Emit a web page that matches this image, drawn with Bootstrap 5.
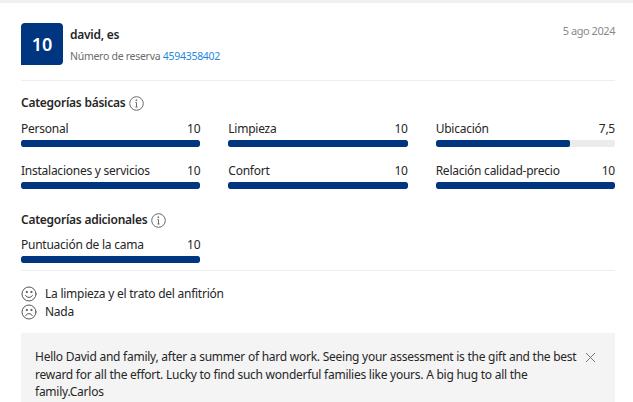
<!DOCTYPE html>
<html lang="es"><head><meta charset="utf-8">
<title>Reseña</title>
<link href="https://cdn.jsdelivr.net/npm/bootstrap@5.3.0/dist/css/bootstrap.min.css" rel="stylesheet">
<style>
html,body{height:402px;overflow:hidden;background:#fff}
body{font-family:"Noto Sans","Open Sans",sans-serif;font-size:12px;line-height:18px;color:#262626;letter-spacing:-.25px}
.rv-page{border-top:3px solid #f0f0f0;padding:20px 18px 0 21px}
.rv-top{gap:7px}
.rv-score{width:42px;height:42px;background:#003580;color:#fff;font-size:18px;font-weight:600;border-radius:4px 4px 4px 0;letter-spacing:0}
.rv-name{font-weight:600;line-height:18px;margin-top:3px}
.rv-sub{font-size:10.5px;color:#6b6b6b;margin-top:3px;line-height:18px;letter-spacing:-.28px}
.rv-sub a{color:#1b87e0;text-decoration:none}
.rv-date{font-size:11px;color:#8a8a8a;line-height:18px;margin-top:-1px;letter-spacing:-.45px}
.rv-rule{height:1px;background:#eee}
.rv-rule-a{margin-top:15px}
.rv-rule-b{margin-top:7px}
.rv-head{font-weight:600;line-height:18px}
.rv-head-a{margin-top:13px}
.rv-head-b{margin-top:22px}
.rv-grid{display:grid;grid-template-columns:repeat(3,1fr);column-gap:28px;row-gap:15px}
.rv-grid-a{margin-top:8px}
.rv-grid-b{margin-top:7px}
.rv-bar{height:7px;background:#ebebeb;border-radius:2px;margin-top:2px}
.rv-bar .progress-bar{background:#003580;border-radius:2px}
.rv-msg{background:#f4f4f4;padding:15px 19px 0 14px;height:69px;line-height:17.5px;margin-top:12px}
.rv-feel{line-height:18px}
.rv-feel-a{margin-top:14px}
</style></head>
<body>
<div class="rv-page">
  <div class="d-flex justify-content-between">
    <div class="d-flex rv-top">
      <div class="rv-score d-flex align-items-center justify-content-center">10</div>
      <div>
        <div class="rv-name">david, es</div>
        <div class="rv-sub">Número de reserva <a href="#">4594358402</a></div>
      </div>
    </div>
    <div class="rv-date">5 ago 2024</div>
  </div>
  <div class="rv-rule rv-rule-a"></div>

  <div class="rv-head rv-head-a d-flex align-items-center gap-1">Categorías básicas
    <svg width="15" height="15" viewBox="0 0 15 15" fill="none" stroke="#6b6b6b"><circle cx="7.5" cy="7.5" r="6.8"/><path d="M7.500 6.500v4.500M6.400 6.500h1.100M6.400 11h2.200"/><circle cx="7.300" cy="4.200" r=".5" fill="#6b6b6b"/></svg>
  </div>
  <div class="rv-grid rv-grid-a">
    <div><div class="d-flex justify-content-between"><span>Personal</span><span>10</span></div><div class="progress rv-bar"><div class="progress-bar" style="width:100%"></div></div></div>
    <div><div class="d-flex justify-content-between"><span>Limpieza</span><span>10</span></div><div class="progress rv-bar"><div class="progress-bar" style="width:100%"></div></div></div>
    <div><div class="d-flex justify-content-between"><span>Ubicación</span><span>7,5</span></div><div class="progress rv-bar"><div class="progress-bar" style="width:75%"></div></div></div>
    <div><div class="d-flex justify-content-between"><span>Instalaciones y servicios</span><span>10</span></div><div class="progress rv-bar"><div class="progress-bar" style="width:100%"></div></div></div>
    <div><div class="d-flex justify-content-between"><span>Confort</span><span>10</span></div><div class="progress rv-bar"><div class="progress-bar" style="width:100%"></div></div></div>
    <div><div class="d-flex justify-content-between"><span>Relación calidad-precio</span><span>10</span></div><div class="progress rv-bar"><div class="progress-bar" style="width:100%"></div></div></div>
  </div>

  <div class="rv-head rv-head-b d-flex align-items-center gap-1">Categorías adicionales
    <svg width="15" height="15" viewBox="0 0 15 15" fill="none" stroke="#6b6b6b"><circle cx="7.5" cy="7.5" r="6.8"/><path d="M7.500 6.500v4.500M6.400 6.500h1.100M6.400 11h2.200"/><circle cx="7.300" cy="4.200" r=".5" fill="#6b6b6b"/></svg>
  </div>
  <div class="rv-grid rv-grid-b">
    <div><div class="d-flex justify-content-between"><span>Puntuación de la cama</span><span>10</span></div><div class="progress rv-bar"><div class="progress-bar" style="width:100%"></div></div></div>
  </div>
  <div class="rv-rule rv-rule-b"></div>

  <div class="rv-feel rv-feel-a d-flex align-items-center gap-2">
    <svg width="16" height="16" viewBox="0 0 16 16" fill="none" stroke="#555" stroke-linecap="round"><circle cx="8" cy="8" r="7"/><path d="M4.600 9.500c1 2.600 5.800 2.600 6.800 0"/><circle cx="5.700" cy="6" r=".6" fill="#555"/><circle cx="10.300" cy="6" r=".6" fill="#555"/></svg>
    <span>La limpieza y el trato del anfitrión</span>
  </div>
  <div class="rv-feel d-flex align-items-center gap-2">
    <svg width="16" height="16" viewBox="0 0 16 16" fill="none" stroke="#555" stroke-linecap="round"><circle cx="8" cy="8" r="7"/><path d="M4.800 11.500c1-2.600 5.400-2.600 6.400 0"/><circle cx="5.700" cy="6" r=".6" fill="#555"/><circle cx="10.300" cy="6" r=".6" fill="#555"/></svg>
    <span>Nada</span>
  </div>

  <div class="rv-msg d-flex justify-content-between gap-2">
    <div>Hello David and family, after a summer of hard work. Seeing your assessment is the gift and the best reward for all the effort. Lucky to find such wonderful families like yours. A big hug to all the family.Carlos</div>
    <svg class="flex-shrink-0 mt-1" width="11" height="11" viewBox="0 0 11 11" stroke="#777"><path d="M1 1l9 9M10 1l-9 9"/></svg>
  </div>
</div>
</body></html>
